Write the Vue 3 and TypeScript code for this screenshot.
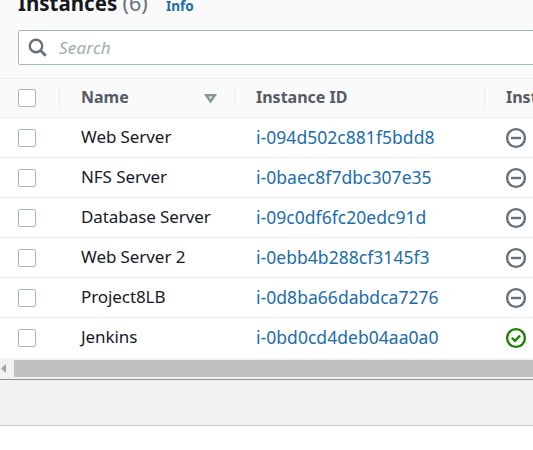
<script setup lang="ts">
interface Instance {
  name: string
  id: string
  running: boolean
}

const instances: Instance[] = [
  { name: 'Web Server', id: 'i-094d502c881f5bdd8', running: false },
  { name: 'NFS Server', id: 'i-0baec8f7dbc307e35', running: false },
  { name: 'Database Server', id: 'i-09c0df6fc20edc91d', running: false },
  { name: 'Web Server 2', id: 'i-0ebb4b288cf3145f3', running: false },
  { name: 'Project8LB', id: 'i-0d8ba66dabdca7276', running: false },
  { name: 'Jenkins', id: 'i-0bd0cd4deb04aa0a0', running: true },
]
</script>

<template>
  <main class="page">
    <header class="top">
      <div class="title">
        <h2>Instances <span class="count">(6)</span></h2>
        <a class="info">Info</a>
      </div>
      <div class="search">
        <svg width="20" height="20" viewBox="0 0 20 20" fill="none" stroke="#687078">
          <circle cx="8" cy="8" r="6.2" stroke-width="2.4" />
          <path d="M12.5 12.5 L17.8 17.8" stroke-width="2.8" />
        </svg>
        <span>Search</span>
      </div>
    </header>

    <div class="row head">
      <div class="cell check"><i class="box"></i></div>
      <div class="cell name">
        <span>Name</span>
        <svg class="sort" width="13" height="11" viewBox="0 0 13 11">
          <path d="M2.2 2.2 H10.8 L6.5 8.4 Z" fill="none" stroke="#879596" stroke-width="2.5" />
        </svg>
      </div>
      <div class="cell id"><span>Instance ID</span></div>
      <div class="cell state"><span>Inst</span></div>
    </div>

    <div v-for="item in instances" :key="item.id" class="row item">
      <div class="cell check"><i class="box"></i></div>
      <div class="cell name"><span>{{ item.name }}</span></div>
      <div class="cell id"><a>{{ item.id }}</a></div>
      <div class="cell state">
        <svg width="22" height="22" viewBox="0 0 22 22" fill="none" :stroke="item.running ? '#1d8102' : '#687078'" stroke-width="2.4">
          <circle cx="11" cy="11" r="8.9" />
          <path v-if="item.running" d="M6.8 10.8 L10 13.9 L15 8.7" />
          <path v-else d="M6 11 H16" />
        </svg>
      </div>
    </div>

    <div class="scrollbar">
      <svg width="14" height="20" viewBox="0 0 14 20"><path d="M6 6 V15 L1 10.5 Z" fill="#a3a3a3" /></svg>
      <div class="thumb"></div>
    </div>
    <div class="split"></div>
    <div class="panel"></div>
  </main>
</template>

<style>
body {
  margin: 0;
  overflow: hidden;
}
</style>

<style scoped>
.page {
  width: 533px;
  height: 450px;
  overflow: hidden;
  display: flex;
  flex-direction: column;
  background: #fff;
  color: #16191f;
  font-family: 'Noto Sans', 'Open Sans', sans-serif;
  font-size: 17px;
}
.top {
  box-sizing: border-box;
  height: 78px;
  flex: none;
  padding-left: 18px;
  background: #fafafa;
}
.title {
  display: flex;
  height: 30px;
  margin-top: -14px;
}
h2 {
  margin: 0;
  width: 148px;
  font-size: 20.5px;
  font-weight: 700;
  line-height: 34px;
  white-space: nowrap;
}
.count {
  color: #687078;
  font-size: 21.5px;
  font-weight: 400;
}
.info {
  color: #1b6cab;
  font-size: 13.5px;
  font-weight: 700;
  line-height: 40px;
}
.search {
  box-sizing: border-box;
  display: flex;
  align-items: center;
  gap: 11px;
  width: 540px;
  height: 35px;
  margin-top: 14px;
  padding-left: 10px;
  border: 1px solid #aab7b8;
  border-radius: 2px;
  background: #fff;
  color: #a3adae;
  font-style: italic;
}
.search svg {
  margin-left: -1px;
}
.search span {
  letter-spacing: 0.2px;
}
.row {
  box-sizing: border-box;
  display: flex;
  flex: none;
  width: 640px;
  height: 40px;
  border-top: 1px solid #eaeded;
}
.item:nth-last-child(4) {
  height: 41px;
  padding-bottom: 1px;
}
.cell {
  box-sizing: border-box;
  display: flex;
  align-items: center;
  white-space: nowrap;
}
.item .name,
.item .id {
  padding-bottom: 2px;
}
.item .name {
  letter-spacing: -0.08px;
}
.check {
  width: 59px;
  padding-left: 18px;
}
.name {
  width: 175px;
  padding-left: 22px;
}
.id {
  width: 250px;
  padding-left: 22px;
}
.id a {
  color: #1b6cab;
  font-size: 17.5px;
  letter-spacing: 0.04px;
}
.state {
  width: 150px;
  padding-left: 21px;
}
.box {
  box-sizing: border-box;
  width: 18px;
  height: 18px;
  margin-top: 1px;
  border: 1px solid #aab7b8;
  border-radius: 2px;
  background: #fff;
}
.head .box {
  margin-top: 0;
}
.state svg {
  margin-top: 1px;
}
.head {
  height: 39px;
  background: #fafafa;
  color: #545b64;
  font-size: 16px;
  font-weight: 700;
}
.head .cell + .cell {
  height: 19px;
  margin-top: 9px;
  border-left: 1px solid #eaeded;
  padding-left: 21px;
}
.head span {
  margin-top: -1px;
}
.sort {
  margin: 1px 17px 0 auto;
}
.scrollbar {
  display: flex;
  flex: none;
  height: 21px;
  background: #f1f1f1;
}
.thumb {
  flex: 1;
  height: 17px;
  margin-top: 2px;
  background: #c1c1c1;
}
.split {
  box-sizing: border-box;
  flex: none;
  height: 47px;
  border-top: 1px solid #879596;
  border-bottom: 1px solid #c8cdcd;
  background: #f2f2f2;
}
.panel {
  flex: 1;
  background: #fff;
}
</style>
